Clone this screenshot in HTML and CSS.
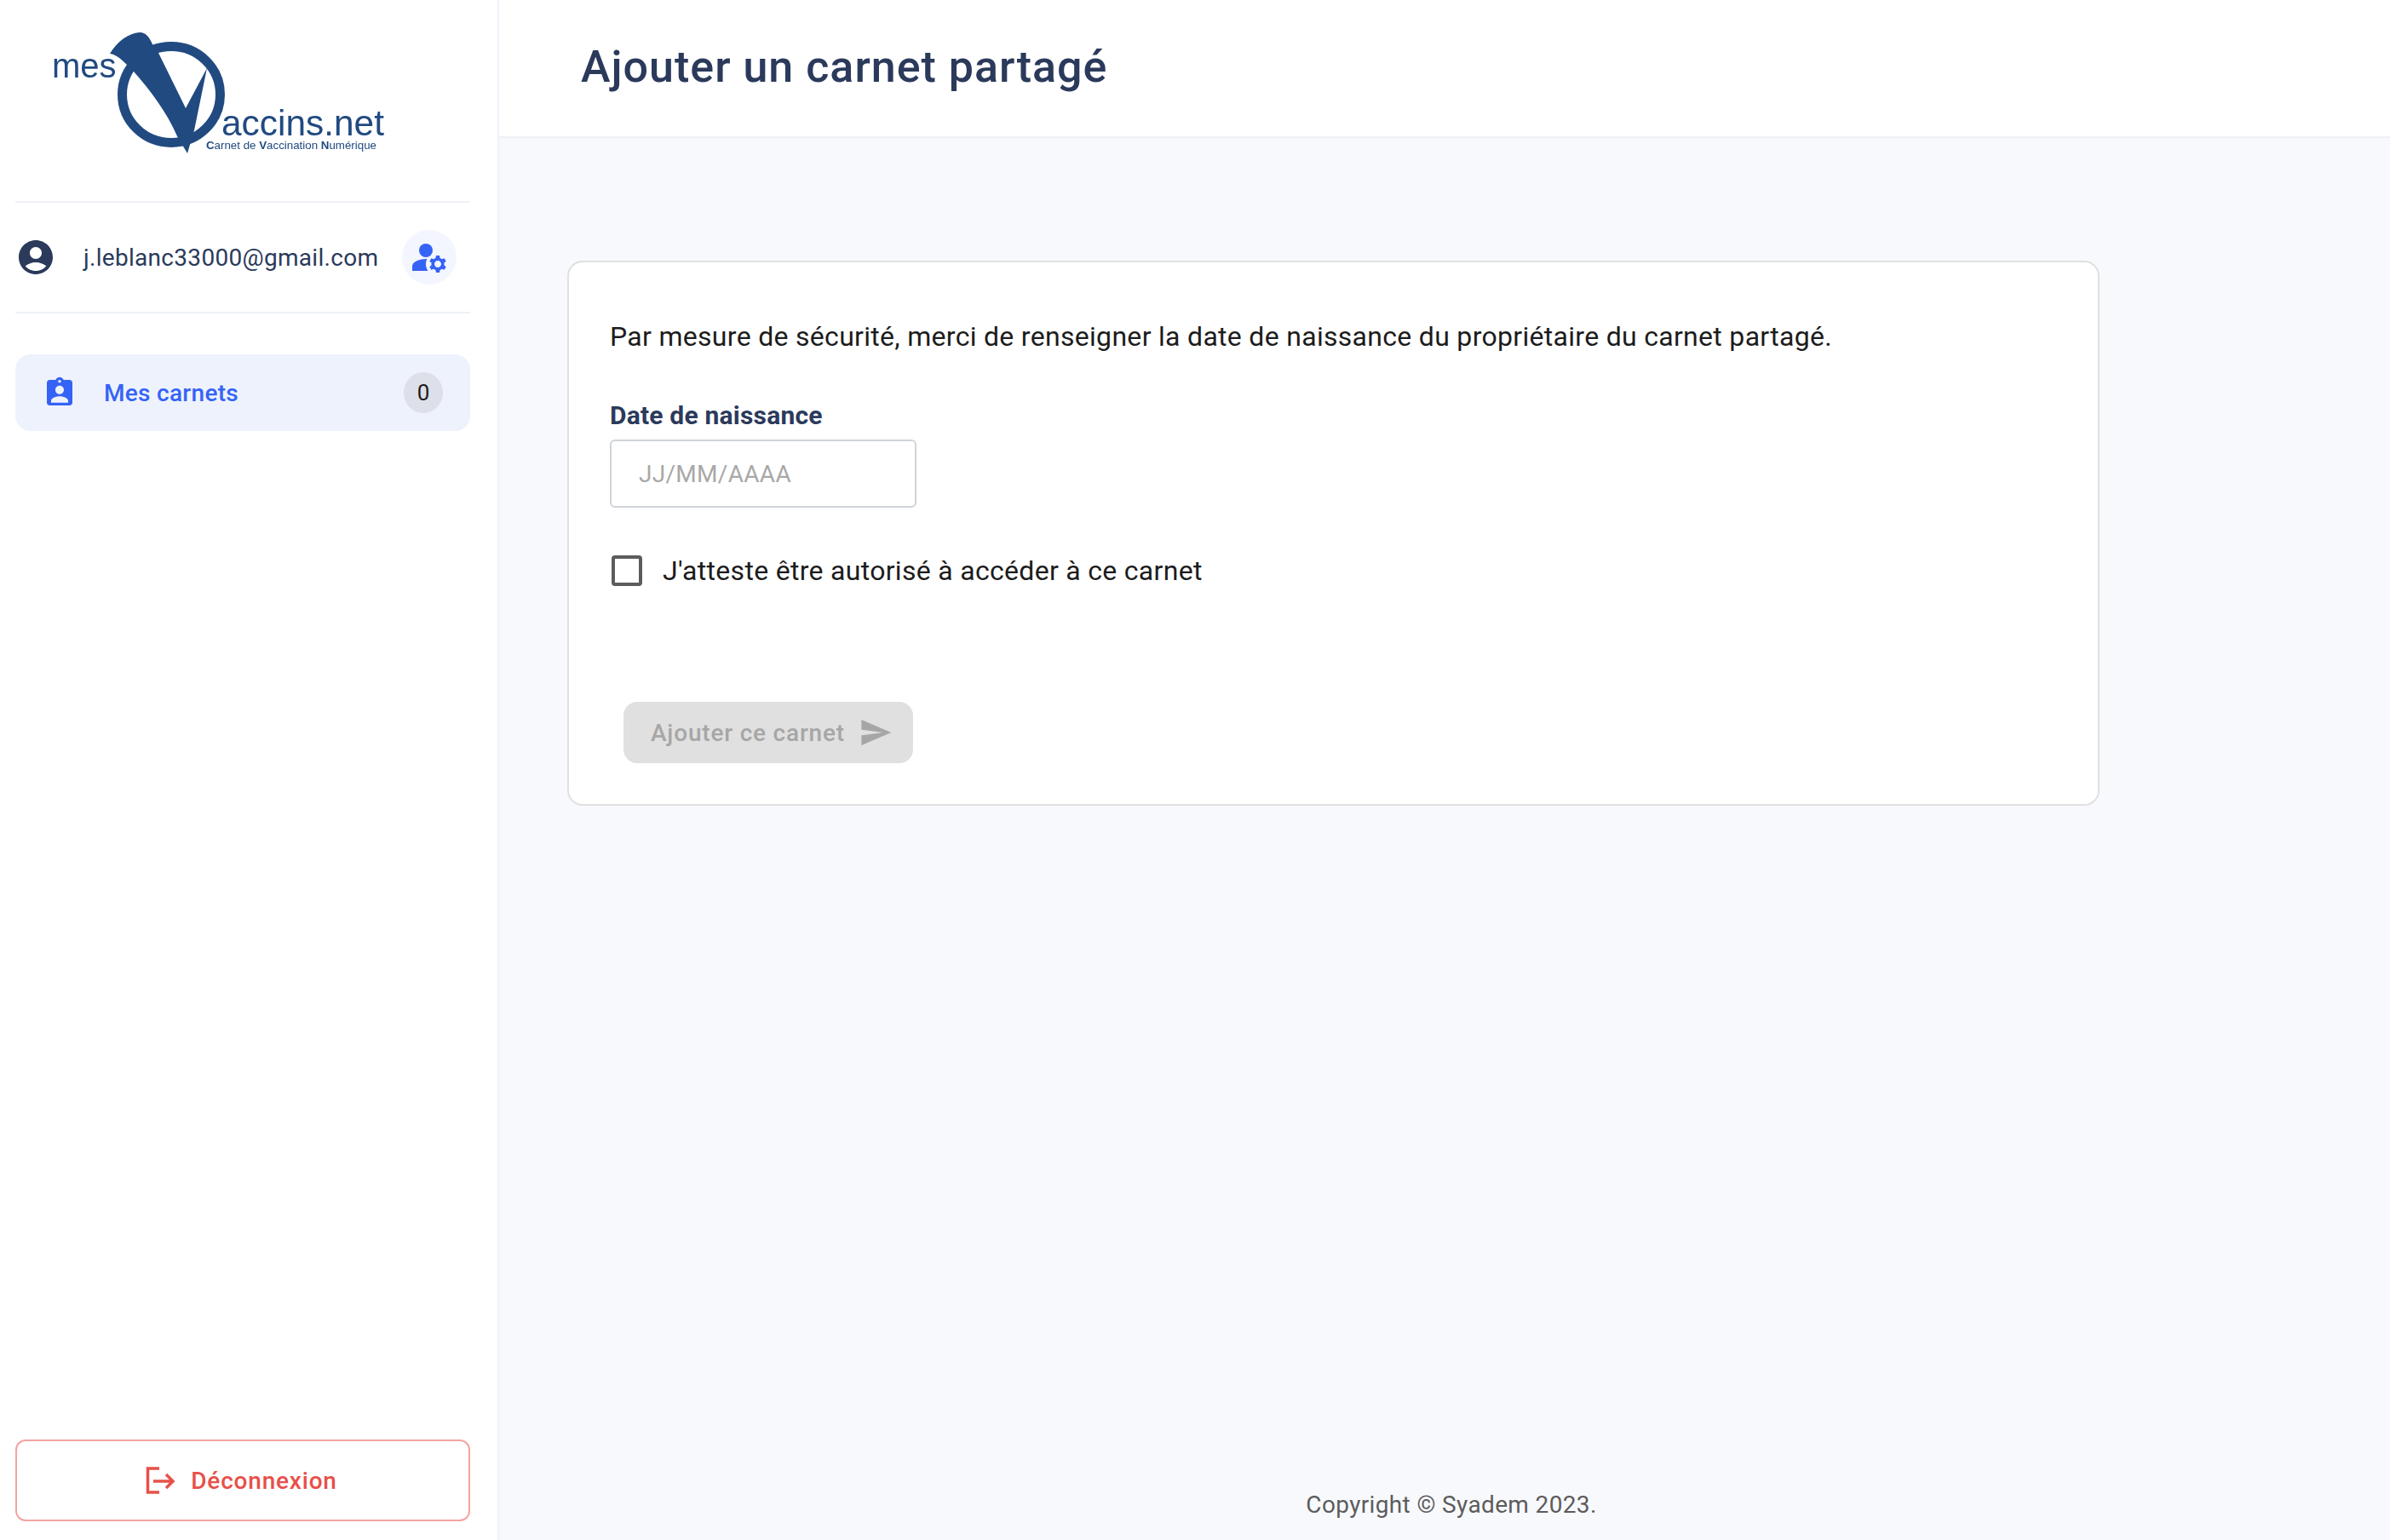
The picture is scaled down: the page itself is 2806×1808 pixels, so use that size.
FILE: index.html
```html
<!DOCTYPE html>
<html lang="fr">
<head>
<meta charset="utf-8">
<title>Ajouter un carnet partagé</title>
<link rel="stylesheet" href="styles.css">
</head>
<body>
<div class="app">
  <aside class="sidebar">
    <div class="logo-wrap">
      <svg class="logo" viewBox="0 0 534 236" width="534" height="236" role="img" aria-label="mesVaccins.net">
        <ellipse class="ring" cx="183" cy="111" rx="57.5" ry="56.5"/>
        <path class="mark" d="M111 63C120 48 133 39 146 38C153 38 157 43 161 52L168 62L200 127L225 80L210 153L202 180L190.500 161C178 132 160 108 139 84L131 76C124 69 118 64 111 63Z"/>
        <text class="logo-mes" x="43" y="91">mes</text>
        <text class="logo-net" x="242" y="159" textLength="191" lengthAdjust="spacingAndGlyphs">accins.net</text>
        <text class="logo-sub" x="224" y="175" textLength="200" lengthAdjust="spacingAndGlyphs"><tspan class="logo-b">C</tspan>arnet de <tspan class="logo-b">V</tspan>accination <tspan class="logo-b">N</tspan>umérique</text>
      </svg>
    </div>
    <div class="user-row">
      <svg class="user-icon" viewBox="0 0 24 24" width="48" height="48"><path d="M12 2C6.480 2 2 6.480 2 12s4.480 10 10 10 10-4.480 10-10S17.520 2 12 2zm0 4c1.930 0 3.500 1.570 3.500 3.500S13.930 13 12 13s-3.500-1.570-3.500-3.500S10.070 6 12 6zm0 14c-2.030 0-4.430-.820-6.140-2.880C7.550 15.800 9.680 15 12 15s4.450.800 6.140 2.120C16.430 19.180 14.030 20 12 20z"/></svg>
      <span class="user-email">j.leblanc33000@gmail.com</span>
      <span class="user-settings">
        <svg viewBox="0 0 24 24" width="48" height="48"><circle cx="10" cy="8" r="4"/><path d="M10.670 13.020c-.220-.010-.440-.020-.670-.020-2.420 0-4.680.670-6.610 1.820-.880.520-1.390 1.500-1.390 2.530V20h9.260c-.790-1.130-1.260-2.510-1.260-4 0-1.070.250-2.070.670-2.980z"/><path d="M20.750 16c0-.220-.030-.420-.060-.630l1.140-1.010-1-1.730-1.450.490c-.320-.270-.680-.480-1.080-.630L18 11h-2l-.3 1.490c-.4.150-.760.360-1.080.630l-1.450-.490-1 1.730 1.140 1.010c-.030.210-.060.410-.060.630s.030.420.060.630l-1.140 1.010 1 1.730 1.450-.490c.320.270.680.480 1.080.630L16 21h2l.3-1.490c.4-.150.760-.360 1.080-.630l1.450.490 1-1.730-1.140-1.010c.030-.210.060-.410.060-.630zM17 18c-1.100 0-2-.9-2-2s.9-2 2-2 2 .9 2 2-.9 2-2 2z"/></svg>
      </span>
    </div>
    <nav class="nav">
      <a class="nav-item">
        <svg class="nav-icon" viewBox="0 0 24 24" width="40" height="40"><path d="M19 3h-4.180C14.400 1.840 13.300 1 12 1c-1.300 0-2.400.840-2.820 2H5c-1.100 0-2 .9-2 2v14c0 1.100.9 2 2 2h14c1.100 0 2-.9 2-2V5c0-1.100-.9-2-2-2zm-7 0c.550 0 1 .450 1 1s-.450 1-1 1-1-.450-1-1 .450-1 1-1zm0 4c1.660 0 3 1.340 3 3s-1.340 3-3 3-3-1.340-3-3 1.340-3 3-3zm6 12H6v-1.400c0-2 4-3.100 6-3.100s6 1.100 6 3.100V19z"/></svg>
        <span class="nav-label">Mes carnets</span>
        <span class="nav-badge">0</span>
      </a>
    </nav>
    <button class="logout" type="button">
      <svg class="logout-icon" viewBox="0 0 36 32" width="36" height="32"><path d="M17 2H3.500V30H17M10 17H32M25 9L33 17L25 25"/></svg>
      <span>Déconnexion</span>
    </button>
  </aside>
  <main class="main">
    <header class="topbar"><h1 class="title">Ajouter un carnet partagé</h1></header>
    <div class="content">
      <section class="card">
        <p class="intro">Par mesure de sécurité, merci de renseigner la date de naissance du propriétaire du carnet partagé.</p>
        <label class="field-label" for="dob">Date de naissance</label>
        <input class="field-input" id="dob" type="text" placeholder="JJ/MM/AAAA">
        <label class="check-row">
          <span class="check-box"></span>
          <span class="check-text">J'atteste être autorisé à accéder à ce carnet</span>
        </label>
        <button class="submit" type="button" disabled>
          <span>Ajouter ce carnet</span>
          <svg viewBox="0 0 24 24" width="40" height="40"><path d="M2.010 21 23 12 2.010 3 2 10l15 2-15 2z"/></svg>
        </button>
      </section>
      <footer class="footer">Copyright © Syadem 2023.</footer>
    </div>
  </main>
</div>
</body>
</html>
```

FILE: styles.css
```css
* { box-sizing: border-box; }
html, body { margin: 0; height: 100%; }
body { font-family: Roboto, "Noto Sans", sans-serif; color: #1c1c1c; background: #fff; }
.app { display: flex; height: 1808px; }

.sidebar {
  width: 586px;
  flex: none;
  display: flex;
  flex-direction: column;
  padding: 0 32px 22px 18px;
  border-right: 2px solid #f0f2fa;
  background: #fff;
}
.logo-wrap { height: 238px; border-bottom: 2px solid #edf1f7; }
.logo { display: block; overflow: visible; filter: blur(.4px); }
.ring { fill: none; stroke: #214a80; stroke-width: 11; }
.mark { fill: #214a80; }
.logo-mes, .logo-net, .logo-sub { font-family: "Liberation Sans", Arial, sans-serif; fill: #214a80; }
.logo-mes { font-size: 40px; }
.logo-net { font-size: 42.500px; }
.logo-sub { font-size: 13px; }
.logo-b { font-weight: 700; }

.user-row {
  height: 130px;
  display: flex;
  align-items: center;
  border-bottom: 2px solid #edf1f7;
}
.user-icon { fill: #2b3a5b; flex: none; }
.user-email { margin-left: 32px; font-size: 28px; letter-spacing: .3px; color: #2b3a5b; white-space: nowrap; }
.user-settings {
  width: 64px;
  height: 64px;
  margin-left: auto;
  margin-right: 16px;
  border-radius: 50%;
  background: #f3f6fe;
  display: flex;
  align-items: center;
  justify-content: center;
}
.user-settings svg { fill: #3563f5; }

.nav { margin-top: 48px; flex: 1; }
.nav-item {
  height: 90px;
  display: flex;
  align-items: center;
  padding: 0 32px;
  border-radius: 18px;
  background: #eef2fd;
}
.nav-icon { fill: #3563f5; flex: none; }
.nav-label { margin-left: 32px; font-size: 28px; font-weight: 500; letter-spacing: .3px; color: #3563f5; }
.nav-badge {
  margin-left: auto;
  width: 46px;
  height: 48px;
  border-radius: 50%;
  background: #dde0e8;
  display: flex;
  align-items: center;
  justify-content: center;
  font-size: 26px;
  color: #1c1c1c;
}

.logout {
  height: 96px;
  display: flex;
  align-items: center;
  justify-content: center;
  gap: 18px;
  padding-right: 10px;
  background: #fff;
  border: 2px solid #f5a3a0;
  border-radius: 12px;
  font: 500 28px Roboto, sans-serif;
  letter-spacing: .8px;
  color: #e8504a;
}
.logout-icon { fill: none; stroke: #e8504a; stroke-width: 3.500; }

.main { flex: 1; min-width: 0; display: flex; flex-direction: column; background: #f8f9fc; }
.topbar {
  height: 162px;
  flex: none;
  display: flex;
  align-items: center;
  padding: 0 0 4px 96px;
  background: #fff;
  border-bottom: 2px solid #edf1f7;
}
.title { margin: 0; font-size: 52px; font-weight: 500; letter-spacing: 1px; color: #2b3a5b; }

.content { flex: 1; display: flex; flex-direction: column; padding: 144px 0 0 80px; }
.card {
  width: 1799px;
  height: 640px;
  padding: 65px 48px 0;
  background: #fff;
  border: 2px solid #e0e0e0;
  border-radius: 18px;
}
.intro { margin: 0; font-size: 32px; line-height: 44px; letter-spacing: .3px; color: #1c1c1c; }
.field-label { display: block; margin-top: 51px; font-size: 30px; line-height: 40px; font-weight: 700; letter-spacing: .2px; color: #2b3a5b; }
.field-input {
  display: block;
  width: 360px;
  height: 80px;
  margin-top: 8px;
  padding: 0 32px;
  border: 2px solid #d0d4da;
  border-radius: 6px;
  background: #fff;
  font: 28px Roboto, sans-serif;
  letter-spacing: .3px;
}
.field-input::placeholder { color: #a8a8a8; opacity: 1; }
.check-row { display: flex; align-items: center; margin-top: 52px; height: 44px; }
.check-box { width: 36px; height: 36px; margin-left: 2px; border: 4px solid #5c5c5c; border-radius: 4px; flex: none; }
.check-text { margin-left: 24px; font-size: 32px; letter-spacing: .3px; color: #1c1c1c; }
.submit {
  width: 340px;
  height: 72px;
  margin: 132px 0 0 16px;
  display: flex;
  align-items: center;
  justify-content: space-between;
  padding: 0 24px 0 32px;
  border: 0;
  border-radius: 16px;
  background: #e0e0e0;
  font: 500 28px Roboto, sans-serif;
  letter-spacing: .8px;
  color: #a6a6a6;
}
.submit svg { fill: #a6a6a6; flex: none; }
.footer { margin-top: auto; padding: 0 0 21px 0; text-align: center; width: 2076px; font-size: 28px; line-height: 40px; letter-spacing: .35px; color: #5c5c5c; }
```
